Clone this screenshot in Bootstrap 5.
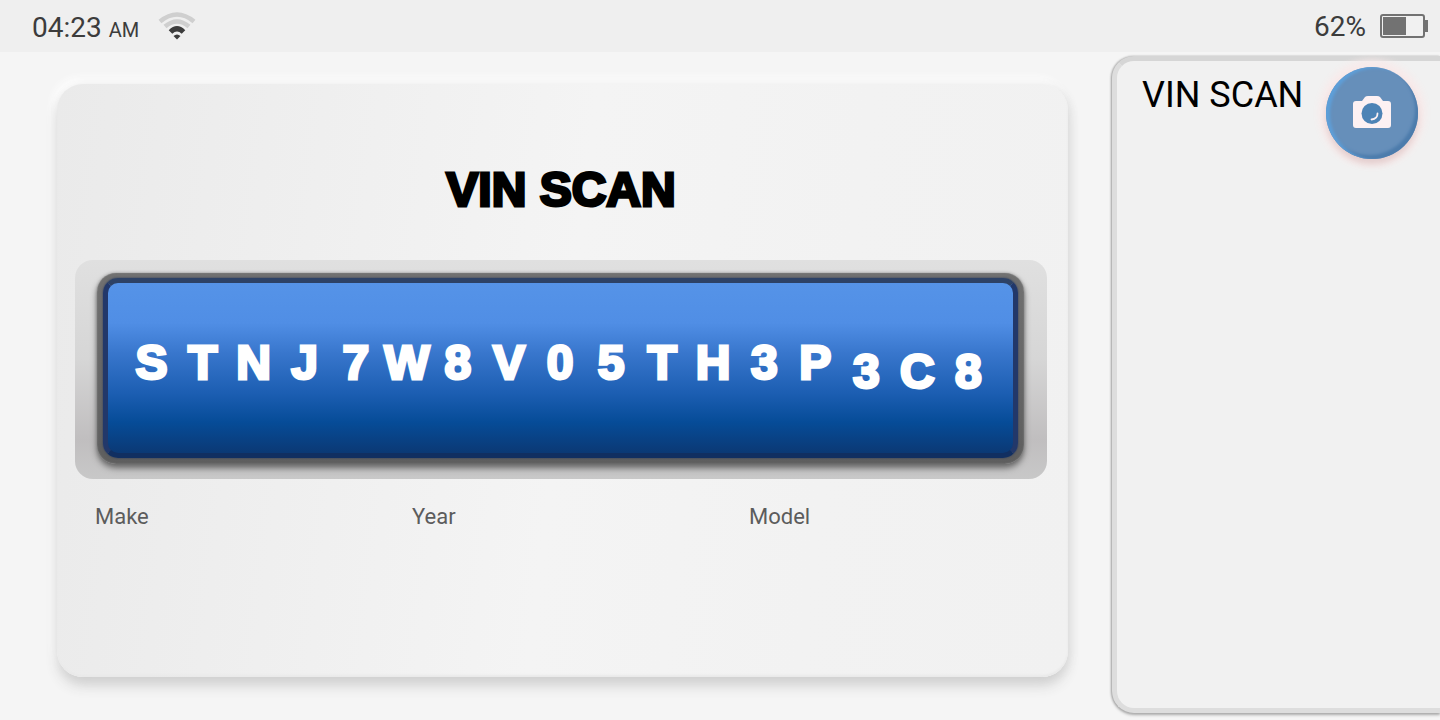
<!DOCTYPE html>
<html lang="en">
<head>
<meta charset="utf-8">
<meta name="viewport" content="width=device-width, initial-scale=1">
<title>VIN Scan</title>
<link rel="stylesheet" href="https://cdn.jsdelivr.net/npm/bootstrap@5.3.0/dist/css/bootstrap.min.css">
<style>
  body { background: #f5f5f5; font-family: Roboto, "Liberation Sans", sans-serif; color: #3c3c3c; }
  .status-bar { height: 52px; background: #efefef; padding: 2px 12px 0 32px; font-size: 28px; line-height: 32px; }
  .status-bar .meridiem { font-size: 20px; }
  .workspace { padding: 4px 0 7px 57px; gap: 44px; min-height: 0; }
  .scan-card { margin: 28px 0 36px; padding: 0 21px 0 18px; border-radius: 26px;
    background: linear-gradient(97deg, #eaeaea 0%, #efefef 25%, #f4f4f4 50%, #f2f2f2 75%, #f1f1f1 100%);
    box-shadow: inset 0 -2px 2px #e9e9e9, 0 10px 14px -2px #cfcfcf, 2px 2px 10px #e4e4e4, -4px -6px 8px #fdfdfd; }
  .scan-title { margin: 78px 0 42px; color: #000; -webkit-text-stroke: 3px #000; }
  .scan-title, .vin { font: 700 48px/56px "Liberation Sans", Arial, sans-serif; }
  .plate { padding: 13px 23px 15px 22px; border-radius: 18px;
    background: linear-gradient(#e0e0e0 0%, #d6d6d6 45%, #c0bebf 82%, #c8c8c8 100%); }
  .bezel { padding: 5px 6px 6px; border-radius: 19px; background: linear-gradient(#707070, #5e5e5e);
    box-shadow: inset 0 0 2px #888, 0 4px 6px #666, 0 0 3px #999; }
  .display { height: 180px; padding: 0 19px 2px 18px; border: 5px solid; border-radius: 15px;
    border-color: #2d4266 #22386a #112f61 #22386a; box-shadow: 0 0 2px #26385c;
    background: linear-gradient(#5694e8 0%, #508ee5 25%, #3876cc 42%, #1c5eb2 64%, #064c98 80%, #0b3975 97%);
    background-origin: border-box; }
  .vin { display: grid; grid-template-columns: repeat(17, 1fr); color: #fff; -webkit-text-stroke: 3px #fff; }
  .vin .dropped { padding-top: 9px; }
  .vin span { display: flex; justify-content: center; }
  .vehicle { display: grid; grid-template-columns: 317fr 337fr 298fr; padding: 24px 0 0 20px; font-size: 22px; line-height: 28px; color: #5c5c5c; }
  .side-panel { width: 328px; padding: 6px 22px 0 25px; border: 5px solid #dddddd; border-top-color: #d6d6d6; border-right: 0;
    border-radius: 22px 0 0 22px; background: #f1f1f1; box-shadow: 0 2px 3px #aaa, -1px 0 2px #aaa; }
  .side-title { margin: 6px 0 0; font-size: 36px; line-height: 44px; font-weight: 400; color: #000; }
  .camera-btn { width: 92px; height: 92px; border: 0; border-radius: 50%; background: #668fba;
    box-shadow: inset 4px 1px 3px #5e9fd9, inset -3px -4px 3px #4d7cac, 0 5px 6px #e3cece, 0 0 7px 7px #f8eaea; }
</style>
</head>
<body class="min-vh-100 d-flex flex-column overflow-hidden">
<header class="status-bar d-flex align-items-center justify-content-between">
  <div class="d-flex align-items-center">
    <div class="pt-1">04:23 <span class="meridiem">AM</span></div>
    <svg class="ms-3" width="44" height="32" viewBox="0 0 44 32" fill="none" role="img" aria-label="Wi-Fi">
      <path d="M5 10.500Q22 -3.500 39 10.500" stroke="#cfcfcf" stroke-width="4.500"/>
      <path d="M10 15.500Q22 5.500 34 15.500" stroke="#cfcfcf" stroke-width="4.500"/>
      <path d="M15.500 21Q22 14.500 28.500 21" stroke="#3c3c3c" stroke-width="5"/>
      <path d="M18.500 25Q22 22 25.500 25L22 28.500Z" fill="#3c3c3c"/>
    </svg>
  </div>
  <div class="d-flex align-items-center">
    <div>62%</div>
    <svg class="ms-2" width="54" height="28" viewBox="0 0 54 28" role="img" aria-label="Battery">
      <rect x="7" y="2" width="43" height="22" rx="2" fill="#f1f1f1" stroke="#727272" stroke-width="2"/>
      <path d="M51 7h3v12h-3z" fill="#727272"/><path d="M9 4h23v18H9z" fill="#727272"/>
    </svg>
  </div>
</header>
<main class="workspace d-flex flex-fill">
  <section class="scan-card flex-fill">
    <h1 class="scan-title text-center">VIN SCAN</h1>
    <div class="plate">
      <div class="bezel">
        <div class="display d-flex flex-column justify-content-center">
          <div class="vin">
            <span>S</span><span>T</span><span>N</span><span>J</span><span>7</span><span>W</span><span>8</span><span>V</span><span>0</span><span>5</span><span>T</span><span>H</span><span>3</span><span>P</span><span class="dropped">3</span><span class="dropped">C</span><span class="dropped">8</span>
          </div>
        </div>
      </div>
    </div>
    <div class="vehicle"><div>Make</div><div>Year</div><div>Model</div></div>
  </section>
  <aside class="side-panel flex-shrink-0">
    <div class="d-flex justify-content-between align-items-start">
      <h2 class="side-title text-nowrap">VIN SCAN</h2>
      <button type="button" class="camera-btn p-0 d-flex align-items-center justify-content-center" aria-label="Scan with camera">
        <svg width="40" height="36" viewBox="0 0 40 36">
          <path d="M4 6h6l3-4q1-1 3-1h9q2 0 3 1l3 4h5q3 0 3 3v21q0 3-3 3H4q-3 0-3-3V9q0-3 3-3Z" fill="#fdf1f3"/>
          <circle cx="20" cy="18.500" r="10.500" fill="#4d83b6"/>
          <path d="M25.500 18.500Q25.500 24 19.500 24.500" fill="none" stroke="#fdf1f3" stroke-width="1.800" stroke-linecap="round"/>
        </svg>
      </button>
    </div>
  </aside>
</main>
<script src="https://cdn.jsdelivr.net/npm/bootstrap@5.3.0/dist/js/bootstrap.bundle.min.js"></script>
</body>
</html>
